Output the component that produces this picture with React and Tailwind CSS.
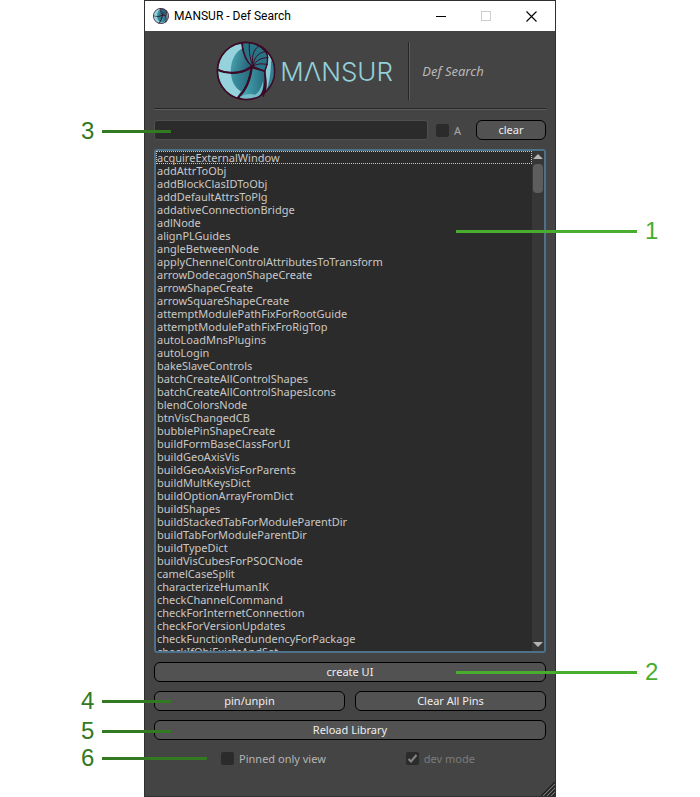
import React from 'react';

const FUNCTIONS = [
  'acquireExternalWindow', 'addAttrToObj', 'addBlockClasIDToObj', 'addDefaultAttrsToPlg',
  'addativeConnectionBridge', 'adlNode', 'alignPLGuides', 'angleBetweenNode',
  'applyChennelControlAttributesToTransform', 'arrowDodecagonShapeCreate', 'arrowShapeCreate',
  'arrowSquareShapeCreate', 'attemptModulePathFixForRootGuide', 'attemptModulePathFixFroRigTop',
  'autoLoadMnsPlugins', 'autoLogin', 'bakeSlaveControls', 'batchCreateAllControlShapes',
  'batchCreateAllControlShapesIcons', 'blendColorsNode', 'btnVisChangedCB', 'bubblePinShapeCreate',
  'buildFormBaseClassForUI', 'buildGeoAxisVis', 'buildGeoAxisVisForParents', 'buildMultKeysDict',
  'buildOptionArrayFromDict', 'buildShapes', 'buildStackedTabForModuleParentDir',
  'buildTabForModuleParentDir', 'buildTypeDict', 'buildVisCubesForPSOCNode', 'camelCaseSplit',
  'characterizeHumanIK', 'checkChannelCommand', 'checkForInternetConnection',
  'checkForVersionUpdates', 'checkFunctionRedundencyForPackage', 'checkIfObjExistsAndSet',
];

function Emblem({ id, className }) {
  return (
    <svg viewBox="21 15 180 180" className={className} aria-hidden="true">
      <defs>
        <linearGradient id={id + 'a'} x1="0" y1="0" x2="1" y2="0.2">
          <stop offset="0.35" stopColor="#4fb0bb" />
          <stop offset="1" stopColor="#2a6a7e" />
        </linearGradient>
        <linearGradient id={id + 'b'} x1="0" y1="0" x2="1" y2="0">
          <stop offset="0.1" stopColor="#45aab6" />
          <stop offset="1" stopColor="#286a7e" />
        </linearGradient>
        <clipPath id={id + 'c'}>
          <circle cx="111" cy="105" r="86" />
        </clipPath>
      </defs>
      <circle cx="111" cy="105" r="87" fill="#3f0a25" />
      <g clipPath={'url(#' + id + 'c)'}>
        <path d="M28 98C32 58 66 24 98 22C101 48 110 72 126 88C104 109 60 114 28 98Z" fill={'url(#' + id + 'a)'} />
        <path d="M28 98C32 58 66 24 98 25L103 36C82 44 66 68 65 107C48 107 36 103 28 98Z" fill="#95d2dc" />
        <path d="M27 106C60 120 104 115 124 96C120 132 105 166 84 184C53 174 29 144 27 106Z" fill={'url(#' + id + 'b)'} />
        <path d="M27 106C37 111 51 113 66 113C68 137 78 155 96 166L84 184C53 174 29 144 27 106Z" fill="#95d2dc" />
        <path d="M131 98L165 107C169 139 164 166 151 179C134 193 105 191 92 184C114 163 126 134 131 98Z" fill={'url(#' + id + 'b)'} />
        <path d="M92 184C108 174 125 172 138 176C150 170 158 153 162 135C164 159 157 178 143 185C126 193 105 191 92 184Z" fill="#74bdc9" />
        <path d="M102 21C132 17 158 33 172 54C180 71 175 90 167 103L132 93C115 79 104 52 102 21Z" fill="#287486" />
        <path d="M174 50C203 79 207 138 170 173C176 145 172 126 169 105C177 88 179 70 174 50Z" fill="#8accd6" />
        <path d="M186 72C204 99 194 139 170 173C183 136 186 102 186 72Z" fill="#347f92" />
      </g>
      <g fill="none" stroke="#3f0a25" strokeWidth="4" strokeLinecap="round">
        <path d="M98 21C101 51 112 78 130 91L168 106" />
        <path d="M27 101C61 116 104 115 128 93" />
        <path d="M128 92C124 130 110 161 85 187" />
        <g strokeWidth="3">
          <path d="M121 22C119 45 123 70 132 91" />
          <path d="M148 31C132 43 127 64 132 91" />
          <path d="M167 47C147 51 133 66 133 91" />
          <path d="M177 65C156 65 139 74 133 91" />
          <path d="M175 86C157 81 142 84 133 91" />
        </g>
        <path d="M174 53C180 74 172 92 167 106C170 131 173 155 163 181" />
      </g>
      <circle cx="111" cy="105" r="86" fill="none" stroke="#3f0a25" strokeWidth="5" />
    </svg>
  );
}

function PushButton({ children, className = '' }) {
  return (
    <button type="button" className={'h-5 rounded-md border border-black bg-[#525252] text-center text-[11px] leading-[18px] text-[#eeeeee] ' + className}>
      {children}
    </button>
  );
}

function Tick({ label, labelClass, ...props }) {
  return (
    <label className={'flex items-center gap-[5px] text-[11px] leading-[13px] ' + labelClass}>
      <span className="relative flex">
        <input type="checkbox" className="peer size-[13px] appearance-none rounded-[2px] bg-[#2b2b2b]" {...props} />
        <svg viewBox="0 0 13 13" className="pointer-events-none absolute inset-0 hidden size-[13px] peer-checked:block" fill="none" stroke="#858585" strokeWidth="2">
          <path d="M2.5 7L5 9.5L10.5 3" />
        </svg>
      </span>
      {label}
    </label>
  );
}

function Callout({ n, side, className, line = 'w-[69px]' }) {
  const right = side === 'right';
  return (
    <div className={'pointer-events-none absolute flex items-center gap-2 text-2xl leading-6 ' + (right ? 'left-[312px] text-[#48ad2e] ' : 'left-[-63px] flex-row-reverse text-[#327921] ') + className}>
      <span className={'h-[3px] bg-current ' + (right ? 'w-[181px]' : line)} />
      <span>{n}</span>
    </div>
  );
}

export default function App() {
  return (
    <main className="min-h-screen bg-white font-['Liberation_Sans',Arial,sans-serif]">
      <div className="relative mx-auto w-full max-w-[412px]">
        <section className="relative border border-[#303030] bg-[#444444] font-['Noto_Sans','Open_Sans',sans-serif]">
          <header className="flex h-[30px] items-center bg-white pl-2 text-black">
            <Emblem id="small" className="size-4" />
            <h1 className="ml-[5px] grow font-['Roboto',sans-serif] text-xs">MANSUR - Def Search</h1>
            <button type="button" aria-label="Minimize" className="flex h-full w-[45px] items-center justify-center">
              <span className="h-px w-[10px] bg-black" />
            </button>
            <button type="button" aria-label="Maximize" disabled className="flex h-full w-[45px] items-center justify-center">
              <span className="size-[10px] border border-[#cccccc]" />
            </button>
            <button type="button" aria-label="Close" className="flex h-full w-[47px] items-center justify-center">
              <svg viewBox="0 0 11 11" className="size-[11px]" stroke="#000" strokeWidth="1.1">
                <path d="M.5 .5L10.5 10.5M10.5 .5L.5 10.5" />
              </svg>
            </button>
          </header>

          <div className="flex flex-col gap-[9px] px-[9px] pt-[10px] pb-[31px]">
            <div className="flex h-[68px] items-start justify-center border-b border-[#262626] shadow-[0_1px_0_#5c5c5c]">
              <div className="flex h-[60px] items-center">
                <Emblem id="large" className="size-[60px]" />
                <span aria-label="MANSUR" className="ml-1 w-32 pt-[2px] font-['Inter',sans-serif] text-[26px] leading-8 font-light text-[#93d0da]">MΛNSUR</span>
                <span className="h-[58px] w-[2px] border-l border-[#262626] bg-[#5c5c5c]" />
                <h2 className="ml-3 pt-[2px] text-[13px] whitespace-nowrap text-[#b8b8b8] italic">Def Search</h2>
              </div>
            </div>

            <div className="mt-[2px] flex items-center">
              <input type="text" aria-label="Search" className="h-5 min-w-0 grow rounded-[3px] border border-[#4f4f4f] bg-[#2b2b2b] px-1 text-[11px] text-[#cccccc] outline-none" />
              <div className="mr-[15px] ml-2"><Tick label="A" labelClass="text-[#a8a8a8]" /></div>
              <PushButton className="w-[70px]">clear</PushButton>
            </div>

            <div className="flex h-[504px] rounded-[3px] border-2 border-[#4d718a] bg-[#2b2b2b]">
              <ul role="listbox" aria-label="Functions" className="min-w-0 grow overflow-hidden text-[11px] leading-[13px] text-[#c8c8c8]">
                {FUNCTIONS.map((name, i) => (
                  <li key={name} role="option" aria-selected={i === 0} className={'h-[13px] pl-px whitespace-nowrap ' + (i === 0 ? 'outline-1 -outline-offset-1 outline-dotted outline-[#c8c8c8]' : '')}>
                    {name}
                  </li>
                ))}
              </ul>
              <div className="flex w-3 flex-col items-center bg-[#373737]" aria-hidden="true">
                <svg viewBox="0 0 12 12" className="size-3" fill="#b4b4b4"><path d="M1 8L6 3L11 8Z" /></svg>
                <span className="mt-px h-[29px] w-[10px] rounded-[4px] bg-[#5d5d5d]" />
                <svg viewBox="0 0 12 12" className="mt-auto size-3" fill="#b4b4b4"><path d="M1 3L6 8L11 3Z" /></svg>
              </div>
            </div>

            <PushButton>create UI</PushButton>
            <div className="grid grid-cols-2 gap-[10px]">
              <PushButton>pin/unpin</PushButton>
              <PushButton>Clear All Pins</PushButton>
            </div>
            <PushButton>Reload Library</PushButton>

            <div className="mt-[3px] flex justify-center gap-20 pr-1">
              <Tick label="Pinned only view" labelClass="text-[#b4b4b4]" />
              <Tick label="dev mode" labelClass="text-[#7c7c7c]" defaultChecked disabled />
            </div>
          </div>

          <svg viewBox="0 0 14 14" className="absolute right-0 bottom-0 size-[14px]" fill="none" aria-hidden="true">
            <path d="M0 14L14 0M4 14L14 4M8 14L14 8M12 14L14 12" stroke="#1e1e1e" strokeWidth="1.2" />
            <path d="M2 14L14 2M6 14L14 6M10 14L14 10" stroke="#777777" />
          </svg>
        </section>

        <Callout n="1" side="right" className="top-[219px]" />
        <Callout n="2" side="right" className="top-[660px]" />
        <Callout n="3" className="top-[119px]" />
        <Callout n="4" className="top-[689px]" />
        <Callout n="5" className="top-[719px]" />
        <Callout n="6" className="top-[746px]" line="w-[105px]" />
      </div>
    </main>
  );
}
